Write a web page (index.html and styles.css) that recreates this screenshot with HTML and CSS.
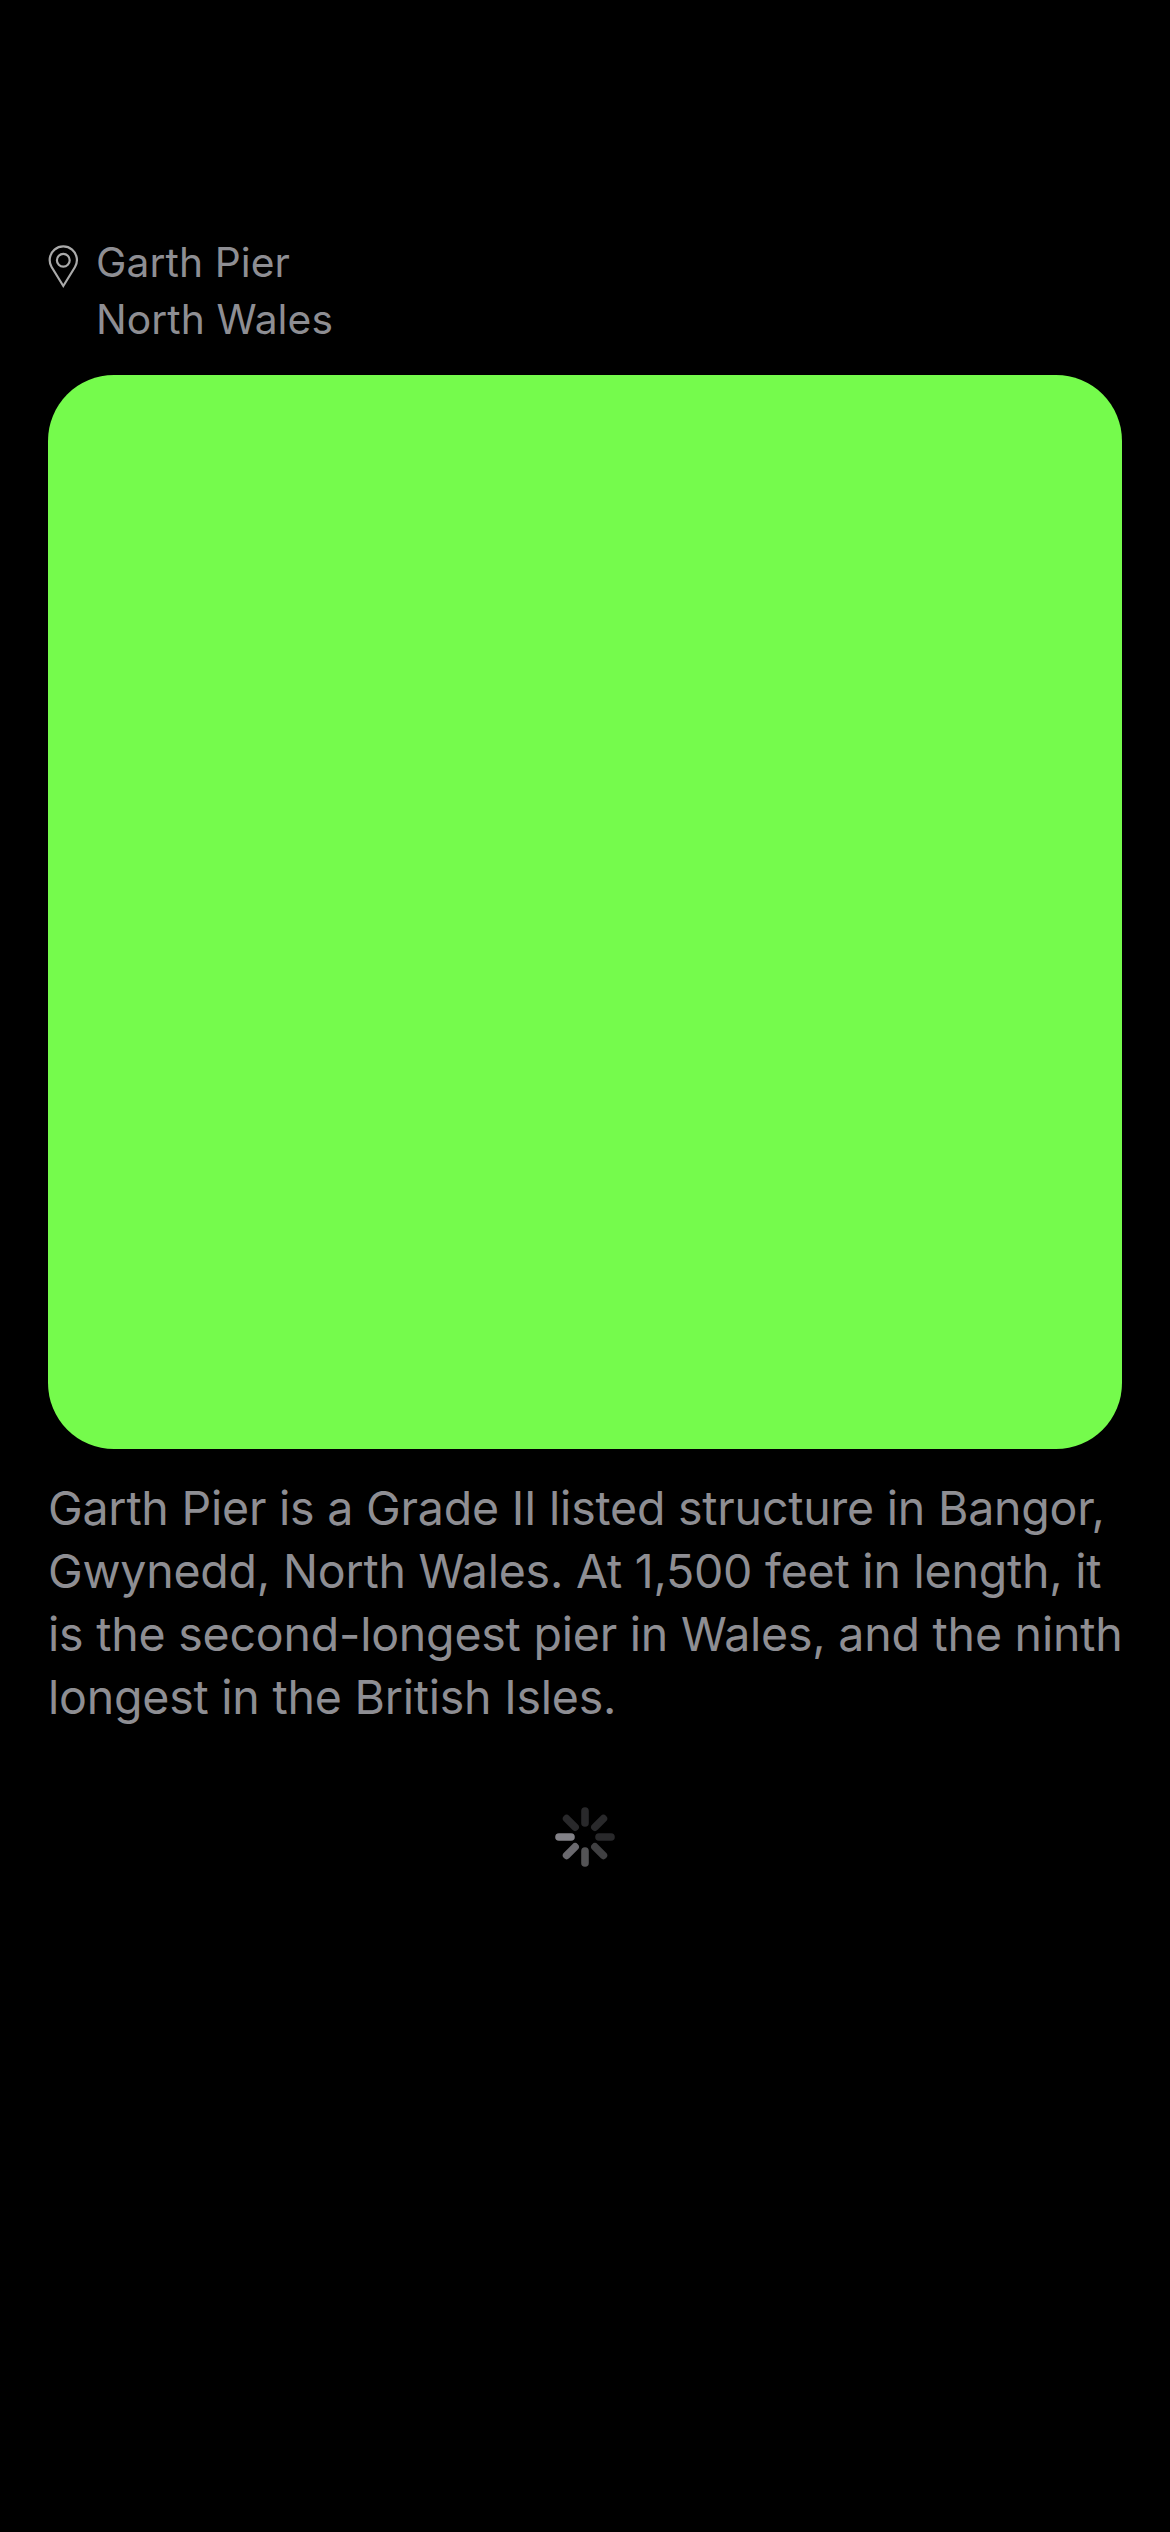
FILE: index.html
```html
<!DOCTYPE html>
<html lang="en">
<head>
<meta charset="utf-8">
<title>Garth Pier</title>
<link rel="stylesheet" href="styles.css">
</head>
<body>
<main class="post">
  <header class="location">
    <svg class="pin" viewBox="0 0 32 44" fill="none" stroke="#aaaaaa" stroke-width="2.2">
      <path d="M15.3 41 L3.6 22 A13.6 13.6 0 1 1 27 22 Z"/>
      <circle cx="15.3" cy="15.3" r="6.4"/>
    </svg>
    <div class="place">Garth Pier<br>North Wales</div>
  </header>
  <div class="photo"></div>
  <p class="description">Garth Pier is a Grade II listed structure in Bangor,<br>Gwynedd, North Wales. At 1,500 feet in length, it<br>is the second-longest pier in Wales, and the ninth<br>longest in the British Isles.</p>
  <svg class="spinner" viewBox="-32 -32 64 64" stroke-width="7.6" stroke-linecap="round" role="img" aria-label="Loading">
    <path stroke="#29292b" d="M0 -26V-14M18.4 -18.4L9.9 -9.9M26 0H14M-18.4 -18.4L-9.9 -9.9"/>
    <path stroke="#404042" d="M18.4 18.4L9.9 9.9"/>
    <path stroke="#545456" d="M0 26V14"/>
    <path stroke="#6a696e" d="M-18.4 18.4L-9.9 9.9"/>
    <path stroke="#828187" d="M-26 0H-14"/>
  </svg>
</main>
</body>
</html>
```
FILE: styles.css
```css
* { box-sizing: border-box; }

body {
  margin: 0;
  background: #000;
  color: #8e8e93;
  font-family: Inter, "Liberation Sans", sans-serif;
}

.post {
  display: flex;
  flex-direction: column;
  height: 2532px;
  padding: 234px 48px 0;
}

.location {
  display: flex;
  gap: 16px;
  height: 141px;
}

.pin {
  width: 32px;
  height: 44px;
  margin-top: 11px;
}

.place {
  font-size: 40.75px;
  line-height: 57px;
  letter-spacing: 0.08px;
  white-space: nowrap;
}

.photo {
  flex: none;
  height: 1074px;
  border-radius: 66px;
  background: #75fb4c;
}

.description {
  margin: 28px 0 0;
  font-size: 46.5px;
  line-height: 63px;
  letter-spacing: -0.22px;
  white-space: nowrap;
}

.spinner {
  align-self: center;
  width: 64px;
  height: 64px;
  margin-top: 76px;
}
```
